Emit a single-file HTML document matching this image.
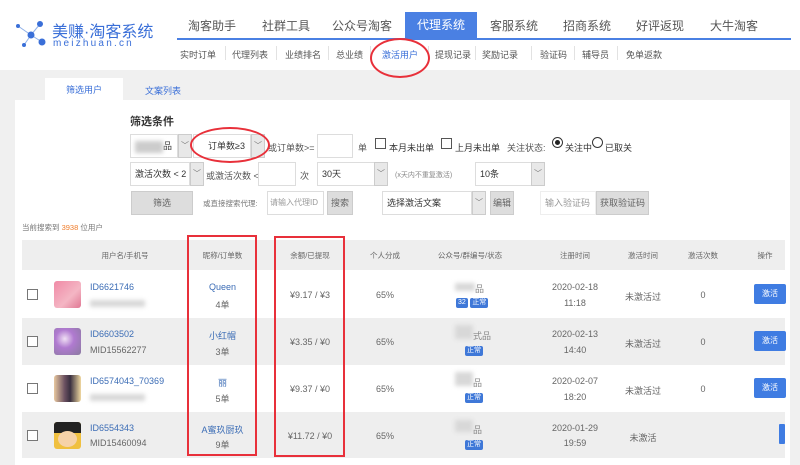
<!DOCTYPE html>
<html><head><meta charset="utf-8">
<style>
*{margin:0;padding:0;box-sizing:border-box}
body{width:800px;height:465px;overflow:hidden;background:#f0f0f0;font-family:"Liberation Sans","Noto Sans CJK SC",sans-serif;color:#555;position:relative;font-size:9px}
.a{position:absolute;white-space:nowrap}
.hdr{position:absolute;left:0;top:0;width:800px;height:70px;background:#fff}
.nav{font-size:12px;color:#555;top:17px}
.sub{font-size:9px;color:#555;top:48px}
.sep{position:absolute;top:46px;width:1px;height:14px;background:#e2e2e2}
.panel{position:absolute;left:15px;top:100px;width:775px;height:365px;background:#fff}
.box{position:absolute;border:1px solid #ddd;background:#fff;height:24px;font-size:9px;color:#333;line-height:22px;padding-left:4px;white-space:nowrap;overflow:hidden}
.arr{position:absolute;border:1px solid #ccc;background:#e8e8e8;height:24px;width:14px;color:#777;font-size:8px;text-align:center;line-height:22px}
.btn{position:absolute;background:#ddd;border:1px solid #ccc;height:24px;line-height:22px;text-align:center;color:#666;font-size:9px;white-space:nowrap}
.cb{position:absolute;width:11px;height:11px;border:1px solid #555;background:#fff}
.row{position:absolute;left:22px;width:763px}
.c{position:absolute;text-align:center;font-size:9px;color:#666;white-space:nowrap}
.blue{color:#3b6cb5}
.tag{display:inline-block;background:#3f78d8;color:#fff;font-size:7px;padding:0 2px;border-radius:2px;line-height:10px}
.act{position:absolute;width:32px;height:20px;background:#3f7ce2;color:#fff;font-size:8px;line-height:20px;text-align:center;border-radius:2px}
.blur{position:absolute;background:#d8d8d8;filter:blur(2px)}
.red{position:absolute;border:2px solid #e8303a}
</style></head><body>
<div class="hdr"></div>
<svg class="a" style="left:14px;top:20px" width="34" height="30" viewBox="0 0 34 30">
<g stroke="#8fb0e8" stroke-width="1"><line x1="4" y1="6" x2="17" y2="15"/><line x1="17" y1="15" x2="26" y2="4"/><line x1="17" y1="15" x2="28" y2="22"/><line x1="17" y1="15" x2="10" y2="25"/></g>
<circle cx="4" cy="6" r="2" fill="#3a6fd8"/><circle cx="26" cy="4" r="3" fill="#3a6fd8"/><circle cx="17" cy="15" r="3.5" fill="#3a6fd8"/><circle cx="28" cy="22" r="3.5" fill="#3a6fd8"/><circle cx="10" cy="25" r="2" fill="#3a6fd8"/>
</svg>
<div class="a" style="left:52px;top:18px;font-size:16px;color:#3a6fd8">美赚·淘客系统</div>
<div class="a" style="left:53px;top:38px;font-size:10px;color:#3a6fd8;letter-spacing:2.2px">meizhuan.cn</div>

<div class="a nav" style="left:188px">淘客助手</div>
<div class="a nav" style="left:262px">社群工具</div>
<div class="a nav" style="left:332px">公众号淘客</div>
<div class="a" style="left:405px;top:12px;width:72px;height:27px;background:#4a80e3;color:#fff;font-size:12px;text-align:center;line-height:27px">代理系统</div>
<div class="a nav" style="left:490px">客服系统</div>
<div class="a nav" style="left:563px">招商系统</div>
<div class="a nav" style="left:636px">好评返现</div>
<div class="a nav" style="left:710px">大牛淘客</div>
<div class="a" style="left:177px;top:38px;width:614px;height:2px;background:#4a80e3"></div>

<div class="a sub" style="left:180px">实时订单</div><div class="sep" style="left:225px"></div>
<div class="a sub" style="left:232px">代理列表</div><div class="sep" style="left:276px"></div>
<div class="a sub" style="left:285px">业绩排名</div><div class="sep" style="left:328px"></div>
<div class="a sub" style="left:336px">总业绩</div><div class="sep" style="left:370px"></div>
<div class="a sub" style="left:382px;color:#3a6fd8">激活用户</div><div class="sep" style="left:428px"></div>
<div class="a sub" style="left:435px">提现记录</div><div class="sep" style="left:475px"></div>
<div class="a sub" style="left:482px">奖励记录</div><div class="sep" style="left:531px"></div>
<div class="a sub" style="left:540px">验证码</div><div class="sep" style="left:574px"></div>
<div class="a sub" style="left:582px">辅导员</div><div class="sep" style="left:617px"></div>
<div class="a sub" style="left:626px">免单返款</div>
<div class="a" style="left:370px;top:38px;width:60px;height:40px;border:2px solid #e8303a;border-radius:50%"></div>

<div class="a" style="left:45px;top:78px;width:78px;height:24px;background:#fff;text-align:center;line-height:24px;font-size:9px;color:#3a6fd8">筛选用户</div>
<div class="a" style="left:145px;top:84px;font-size:9px;color:#3a6fd8">文案列表</div>
<div class="panel"></div>

<div class="a" style="left:130px;top:113px;font-size:11px;font-weight:bold;color:#333">筛选条件</div>
<div class="box" style="left:130px;top:134px;width:48px"><span style="display:inline-block;width:28px;height:12px;background:#ccc;filter:blur(2px);vertical-align:middle"></span>品</div>
<div class="arr" style="left:178px;top:134px">﹀</div>
<div class="box" style="left:193px;top:134px;width:58px;padding-left:14px">订单数≥3</div>
<div class="arr" style="left:251px;top:134px">﹀</div>
<div class="a" style="left:268px;top:141px;font-size:9px">或订单数>=</div>
<div class="box" style="left:317px;top:134px;width:36px"></div>
<div class="a" style="left:358px;top:141px">单</div>
<div class="cb" style="left:375px;top:138px"></div><div class="a" style="left:389px;top:141px;color:#333">本月未出单</div>
<div class="cb" style="left:441px;top:138px"></div><div class="a" style="left:455px;top:141px;color:#333">上月未出单</div>
<div class="a" style="left:507px;top:141px">关注状态:</div>
<div class="a" style="left:552px;top:137px;width:11px;height:11px;border:1px solid #333;border-radius:50%"><div style="margin:2px;width:5px;height:5px;background:#222;border-radius:50%"></div></div>
<div class="a" style="left:565px;top:141px;color:#333">关注中</div>
<div class="a" style="left:592px;top:137px;width:11px;height:11px;border:1px solid #333;border-radius:50%"></div>
<div class="a" style="left:605px;top:141px;color:#333">已取关</div>
<div class="a" style="left:190px;top:127px;width:80px;height:36px;border:2px solid #e8303a;border-radius:50%"></div>
<div class="box" style="left:130px;top:162px;width:60px">激活次数 &lt; 2</div>
<div class="arr" style="left:190px;top:162px">﹀</div>
<div class="a" style="left:206px;top:169px">或激活次数 &lt;</div>
<div class="box" style="left:258px;top:162px;width:38px"></div>
<div class="a" style="left:300px;top:169px">次</div>
<div class="box" style="left:317px;top:162px;width:58px">30天</div>
<div class="arr" style="left:374px;top:162px">﹀</div>
<div class="a" style="left:395px;top:170px;font-size:7px;color:#888">(x天内不重复激活)</div>
<div class="box" style="left:475px;top:162px;width:58px">10条</div>
<div class="arr" style="left:531px;top:162px">﹀</div>
<div class="btn" style="left:131px;top:191px;width:62px">筛选</div>
<div class="a" style="left:203px;top:198px;font-size:7.5px;color:#777">或直接搜索代理:</div>
<div class="box" style="left:267px;top:191px;width:57px;color:#999;font-size:8px;padding-left:2px">请输入代理ID</div>
<div class="btn" style="left:327px;top:191px;width:26px">搜索</div>
<div class="box" style="left:382px;top:191px;width:90px">选择激活文案</div>
<div class="arr" style="left:472px;top:191px">﹀</div>
<div class="btn" style="left:490px;top:191px;width:24px">编辑</div>
<div class="box" style="left:540px;top:191px;width:56px;color:#999;border-color:#eee">输入验证码</div>
<div class="btn" style="left:596px;top:191px;width:53px">获取验证码</div>

<div class="a" style="left:22px;top:222px;font-size:7.5px;color:#777">当前搜索到 <span style="color:#f07c2a">3938</span> 位用户</div>

<div class="row" style="top:240px;height:30px;background:#eeeeee"></div>
<div class="c" style="left:85px;width:80px;top:250px;font-size:7.5px">用户名/手机号</div>
<div class="c" style="left:190px;width:65px;top:250px;font-size:7.5px">昵称/订单数</div>
<div class="c" style="left:275px;width:70px;top:250px;font-size:7.5px">余额/已提现</div>
<div class="c" style="left:355px;width:60px;top:250px;font-size:7.5px">个人分成</div>
<div class="c" style="left:420px;width:100px;top:250px;font-size:7.5px">公众号/群编号/状态</div>
<div class="c" style="left:545px;width:60px;top:250px;font-size:7.5px">注册时间</div>
<div class="c" style="left:613px;width:60px;top:250px;font-size:7.5px">激活时间</div>
<div class="c" style="left:673px;width:60px;top:250px;font-size:7.5px">激活次数</div>
<div class="c" style="left:745px;width:40px;top:250px;font-size:7.5px">操作</div>

<div class="row" style="top:270px;height:48px;background:#fff"></div>
<div class="row" style="top:318px;height:47px;background:#eeeeee"></div>
<div class="row" style="top:365px;height:47px;background:#fff"></div>
<div class="row" style="top:412px;height:46px;background:#eeeeee"></div>

<div class="cb" style="left:27px;top:289px;border-color:#777"></div>
<div class="a" style="left:54px;top:281px;width:27px;height:27px;border-radius:3px;background:linear-gradient(135deg,#f08aa6,#f4b6c4 60%,#e07894)"></div>
<div class="a blue" style="left:90px;top:282px">ID6621746</div>
<div class="blur" style="left:90px;top:300px;width:55px;height:7px"></div>
<div class="c blue" style="left:190px;width:65px;top:282px">Queen</div>
<div class="c" style="left:190px;width:65px;top:298px">4单</div>
<div class="c" style="left:275px;width:70px;top:290px">¥9.17 / ¥3</div>
<div class="c" style="left:355px;width:60px;top:290px">65%</div>
<div class="blur" style="left:455px;top:283px;width:20px;height:8px"></div><div class="a" style="left:475px;top:282px;color:#888">品</div>
<div class="a" style="left:456px;top:296px"><span class="tag">32</span> <span class="tag">正常</span></div>
<div class="c" style="left:545px;width:60px;top:282px">2020-02-18</div>
<div class="c" style="left:545px;width:60px;top:298px">11:18</div>
<div class="c" style="left:613px;width:60px;top:290px">未激活过</div>
<div class="c" style="left:673px;width:60px;top:290px">0</div>
<div class="act" style="left:754px;top:284px">激活</div>

<div class="cb" style="left:27px;top:336px;border-color:#777"></div>
<div class="a" style="left:54px;top:328px;width:27px;height:27px;border-radius:3px;background:radial-gradient(circle at 40% 40%,#f0e0f4,#b07ad0 40%,#8a7aa0)"></div>
<div class="a blue" style="left:90px;top:329px">ID6603502</div>
<div class="a" style="left:90px;top:345px;font-size:9px;color:#666">MID15562277</div>
<div class="c blue" style="left:190px;width:65px;top:329px">小红帽</div>
<div class="c" style="left:190px;width:65px;top:345px">3单</div>
<div class="c" style="left:275px;width:70px;top:337px">¥3.35 / ¥0</div>
<div class="c" style="left:355px;width:60px;top:337px">65%</div>
<div class="blur" style="left:455px;top:325px;width:18px;height:14px"></div><div class="a" style="left:473px;top:329px;color:#888">式品</div>
<div class="a" style="left:465px;top:344px"><span class="tag">正常</span></div>
<div class="c" style="left:545px;width:60px;top:329px">2020-02-13</div>
<div class="c" style="left:545px;width:60px;top:345px">14:40</div>
<div class="c" style="left:613px;width:60px;top:337px">未激活过</div>
<div class="c" style="left:673px;width:60px;top:337px">0</div>
<div class="act" style="left:754px;top:331px">激活</div>

<div class="cb" style="left:27px;top:383px;border-color:#777"></div>
<div class="a" style="left:54px;top:375px;width:27px;height:27px;border-radius:3px;background:linear-gradient(90deg,#e8c8a0,#6a5060 40%,#3a3040 60%,#f0d8a0)"></div>
<div class="a blue" style="left:90px;top:376px">ID6574043_70369</div>
<div class="blur" style="left:90px;top:394px;width:55px;height:7px"></div>
<div class="c blue" style="left:190px;width:65px;top:376px">丽</div>
<div class="c" style="left:190px;width:65px;top:392px">5单</div>
<div class="c" style="left:275px;width:70px;top:384px">¥9.37 / ¥0</div>
<div class="c" style="left:355px;width:60px;top:384px">65%</div>
<div class="blur" style="left:455px;top:372px;width:18px;height:14px"></div><div class="a" style="left:473px;top:376px;color:#888">品</div>
<div class="a" style="left:465px;top:391px"><span class="tag">正常</span></div>
<div class="c" style="left:545px;width:60px;top:376px">2020-02-07</div>
<div class="c" style="left:545px;width:60px;top:392px">18:20</div>
<div class="c" style="left:613px;width:60px;top:384px">未激活过</div>
<div class="c" style="left:673px;width:60px;top:384px">0</div>
<div class="act" style="left:754px;top:378px">激活</div>

<div class="cb" style="left:27px;top:430px;border-color:#777"></div>
<div class="a" style="left:54px;top:422px;width:27px;height:27px;border-radius:3px;background:#f0c040;overflow:hidden"><div style="position:absolute;left:0;top:0;width:27px;height:11px;background:#222"></div><div style="position:absolute;left:4px;top:9px;width:19px;height:16px;background:#f6d2a8;border-radius:50%"></div></div>
<div class="a blue" style="left:90px;top:423px">ID6554343</div>
<div class="a" style="left:90px;top:438px;font-size:9px;color:#666">MID15460094</div>
<div class="c blue" style="left:190px;width:65px;top:423px">A蜜玖厨玖</div>
<div class="c" style="left:190px;width:65px;top:438px">9单</div>
<div class="c" style="left:275px;width:70px;top:431px">¥11.72 / ¥0</div>
<div class="c" style="left:355px;width:60px;top:431px">65%</div>
<div class="blur" style="left:455px;top:420px;width:18px;height:12px"></div><div class="a" style="left:473px;top:423px;color:#888">品</div>
<div class="a" style="left:465px;top:438px"><span class="tag">正常</span></div>
<div class="c" style="left:545px;width:60px;top:423px">2020-01-29</div>
<div class="c" style="left:545px;width:60px;top:438px">19:59</div>
<div class="c" style="left:613px;width:60px;top:431px">未激活</div>
<div class="a" style="left:779px;top:424px;width:6px;height:20px;background:#3f7ce2;border-radius:1px"></div>

<div class="red" style="left:187px;top:235px;width:70px;height:221px"></div>
<div class="red" style="left:274px;top:236px;width:71px;height:221px"></div>
</body></html>
